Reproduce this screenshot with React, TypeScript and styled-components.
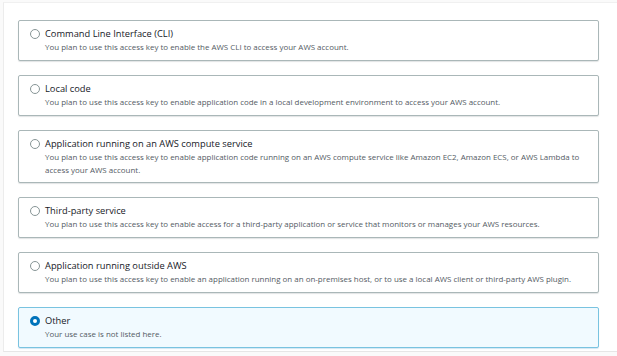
import React from "react";
import styled, { createGlobalStyle } from "styled-components";

const Global = createGlobalStyle`
  html, body { margin: 0; padding: 0; background: #ffffff; }
  body { font-family: "Open Sans", "Noto Sans", sans-serif; }
`;

const Frame = styled.div`
  width: 617px;
  height: 356px;
  box-sizing: border-box;
  padding: 2px 0 0 3px;
  background: #fafafa;
`;

const Panel = styled.div`
  box-sizing: border-box;
  height: 350px;
  background: #ffffff;
  border-top: 1px solid #f0f0f0;
  border-left: 1px solid #ececec;
  border-bottom: 1px solid #e6e6e6;
  padding: 17px 18px 0 14px;
  display: flex;
  flex-direction: column;
  gap: 14px;
`;

const Card = styled.label<{ $selected?: boolean }>`
  display: flex;
  align-items: flex-start;
  gap: 5px;
  box-sizing: border-box;
  min-height: 41px;
  padding: 6px 10px 6px 11px;
  border: 1px solid ${(p) => (p.$selected ? "#79c3e0" : "#aab7b8")};
  border-radius: 2px;
  background: ${(p) => (p.$selected ? "#f1faff" : "#ffffff")};
  box-shadow: 0 1px 1px ${(p) => (p.$selected ? "rgba(0,115,187,0.18)" : "rgba(0,28,36,0.12)")};
  cursor: pointer;
`;

const Radio = styled.span<{ $selected?: boolean }>`
  flex: 0 0 auto;
  box-sizing: border-box;
  width: 10px;
  height: 10px;
  margin-top: 2px;
  border-radius: 50%;
  border: ${(p) => (p.$selected ? "3px solid #0073bb" : "1px solid #879596")};
  background: #ffffff;
`;

const Texts = styled.div`
  display: flex;
  flex-direction: column;
`;

const Title = styled.div`
  font-size: 9.3px;
  line-height: 14px;
  color: #16191f;
  font-weight: 500;
`;

const Desc = styled.div`
  font-size: 7.95px;
  line-height: 12.5px;
  color: #545b64;
`;

const options = [
  {
    title: "Command Line Interface (CLI)",
    desc: "You plan to use this access key to enable the AWS CLI to access your AWS account.",
  },
  {
    title: "Local code",
    desc: "You plan to use this access key to enable application code in a local development environment to access your AWS account.",
  },
  {
    title: "Application running on an AWS compute service",
    desc: "You plan to use this access key to enable application code running on an AWS compute service like Amazon EC2, Amazon ECS, or AWS Lambda to access your AWS account.",
  },
  {
    title: "Third-party service",
    desc: "You plan to use this access key to enable access for a third-party application or service that monitors or manages your AWS resources.",
  },
  {
    title: "Application running outside AWS",
    desc: "You plan to use this access key to enable an application running on an on-premises host, or to use a local AWS client or third-party AWS plugin.",
  },
  {
    title: "Other",
    desc: "Your use case is not listed here.",
    selected: true,
  },
];

export default function App() {
  return (
    <>
      <Global />
      <Frame>
        <Panel>
          {options.map((o) => (
            <Card key={o.title} $selected={o.selected}>
              <Radio $selected={o.selected} />
              <Texts>
                <Title>{o.title}</Title>
                <Desc>{o.desc}</Desc>
              </Texts>
            </Card>
          ))}
        </Panel>
      </Frame>
    </>
  );
}
